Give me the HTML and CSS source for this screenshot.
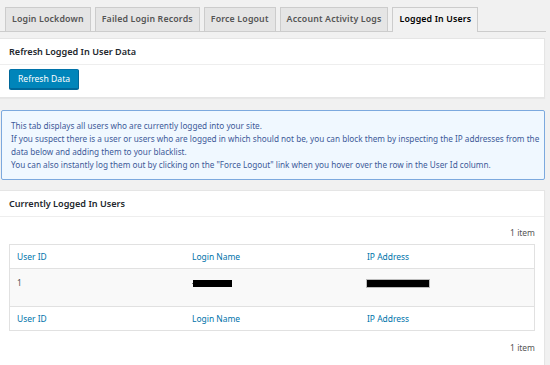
FILE: index.html
```html
<!DOCTYPE html>
<html lang="en">
<head>
  <meta charset="UTF-8">
  <title>Logged In Users</title>
  <link rel="stylesheet" href="styles.css">
</head>
<body>

<!-- Tabs -->
<div class="tabs">
  <a class="tab">Login Lockdown</a>
  <a class="tab">Failed Login Records</a>
  <a class="tab">Force Logout</a>
  <a class="tab">Account Activity Logs</a>
  <a class="tab active">Logged In Users</a>
</div>

<div class="postbox">
  <h3 class="hndle">Refresh Logged In User Data</h3>
  <div class="inside">
    <button class="button-primary">Refresh Data</button>
  </div>
</div>

<div class="info-box">
  This tab displays all users who are currently logged into your site.<br>
  If you suspect there is a user or users who are logged in which should not be, you can block them by inspecting the IP addresses from the<br>
  data below and adding them to your blacklist.<br>
  You can also instantly log them out by clicking on the "Force Logout" link when you hover over the row in the User Id column.
</div>

<div class="postbox">
  <h3 class="hndle">Currently Logged In Users</h3>
  <div class="inside">
    <div class="tablenav">1 item</div>
    <table class="widefat">
      <thead>
        <tr>
          <th class="col-id">User ID</th>
          <th class="col-name">Login Name</th>
          <th>IP Address</th>
        </tr>
      </thead>
      <tbody>
        <tr>
          <td>1</td>
          <td><span class="dot"></span><span class="redact redact-name"></span></td>
          <td><span class="redact redact-ip"></span></td>
        </tr>
      </tbody>
      <tfoot>
        <tr>
          <th>User ID</th>
          <th>Login Name</th>
          <th>IP Address</th>
        </tr>
      </tfoot>
    </table>
    <div class="tablenav bottom">1 item</div>
  </div>
</div>

</body>
</html>
```

FILE: styles.css
```css
body {
  margin: 0;
  background: #f1f1f1;
  font-family: "Noto Sans", "Open Sans", sans-serif;
  font-size: 8.45px;
  color: #444;
}

/* Tabs */
.tabs {
  display: flex;
  gap: 4px;
  padding: 7px 0 0 5px;
  margin-right: 4px;
  border-bottom: 1px solid #ccc;
}

.tab {
  display: block;
  height: 23px;
  line-height: 23px;
  padding: 0 6px;
  border: 1px solid #ccc;
  border-bottom: none;
  background: #e5e5e5;
  color: #555;
  font-weight: 600;
  font-size: 8.8px;
  letter-spacing: 0.15px;
}

.tab.active {
  background: #f1f1f1;
  color: #000;
  margin-bottom: -1px;
  height: 24px;
}

/* Boxes */
.postbox {
  background: #fff;
  border: 1px solid #e5e5e5;
  border-left: none;
  box-shadow: 0 1px 1px rgba(0,0,0,0.04);
  margin: 6px 5px 0 0;
}

.hndle {
  margin: 0;
  height: 25px;
  line-height: 26px;
  padding: 0 9px;
  border-bottom: 1px solid #eee;
  font-size: 9.1px;
  font-weight: 600;
  color: #23282d;
}

.inside {
  padding: 4px 9px 8px;
}

.button-primary {
  height: 20px;
  padding: 0 8px;
  background: #0085ba;
  border: 1px solid #0073aa;
  border-color: #0073aa #006799 #006799;
  border-radius: 2px;
  box-shadow: 0 1px 0 #006799;
  color: #fff;
  font-family: inherit;
  font-size: 8.6px;
  cursor: pointer;
}

.info-box {
  margin: 12px 5px 10px 1px;
  padding: 8px 0 8px 9px;
  border: 1px solid #7ca9de;
  border-radius: 2px;
  background: #f0f8ff;
  color: #3d5a99;
  font-size: 8.2px;
  line-height: 13px;
  white-space: nowrap;
}

.info-box + .postbox {
  margin-top: 0;
}

/* Table */
.tablenav {
  text-align: right;
  height: 23px;
  line-height: 24px;
  color: #555;
}

.tablenav.bottom {
  margin-top: 5px;
}

.widefat {
  width: 100%;
  border-collapse: collapse;
  border: 1px solid #e1e1e1;
}

.widefat th {
  text-align: left;
  font-weight: normal;
  color: #0073aa;
  height: 23px;
  padding: 0 7px;
}

.col-id,
.col-name {
  width: 161px;
}

.widefat thead th {
  border-bottom: 1px solid #e1e1e1;
}

.widefat tfoot th {
  border-top: 1px solid #e1e1e1;
}

.widefat td {
  background: #f9f9f9;
  height: 38px;
  padding: 8px 7px 0;
  vertical-align: top;
  box-sizing: border-box;
  color: #555;
}

.redact {
  display: inline-block;
  height: 7px;
  background: #000;
  vertical-align: middle;
}

.redact-name {
  width: 39px;
}

.redact-ip {
  width: 62px;
  outline: 1px solid #bbb;
}

.dot {
  display: inline-block;
  width: 1px;
  height: 1px;
  background: #777;
  vertical-align: middle;
}
```
